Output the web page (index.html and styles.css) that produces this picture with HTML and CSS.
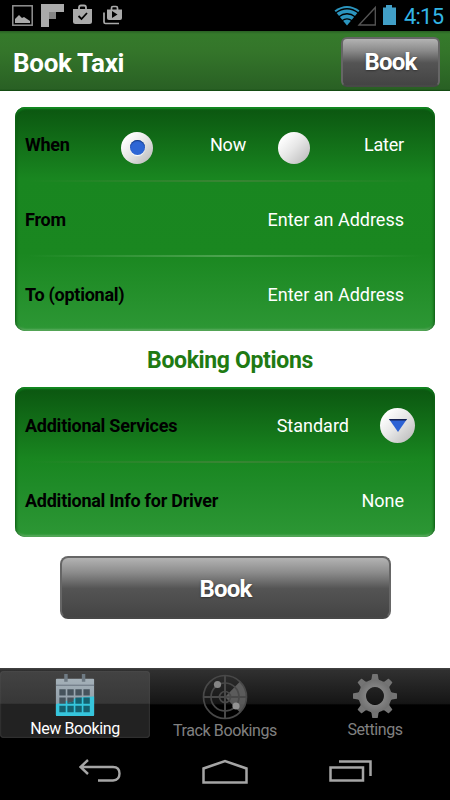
FILE: index.html
```html
<!DOCTYPE html>
<html lang="en">

<head>
    <meta charset="UTF-8">
    <meta name="viewport" content="width=device-width, initial-scale=1.0">
    <title>Book Taxi</title>
    <link rel="stylesheet" href="styles.css">
</head>

<body>
    <!-- Android status bar -->
    <div class="statusbar">
        <svg class="notifications" width="125" height="31" viewBox="0 0 125 31">
            <rect x="12.8" y="5.8" width="19.4" height="19.4" fill="none" stroke="#929292" stroke-width="1.5"/>
            <path d="M15 23v-4l4-4 3 3 2-1 6 4v2z" fill="#aaa"/>
            <path d="M41 4h23v8H49v15h-8z" fill="#aaa"/>
            <path d="M49 12h7v7h-7z" fill="#858585"/>
            <path d="M79 9V7.500q0-2 2-2h3q2 0 2 2V9" fill="none" stroke="#aaa" stroke-width="1.800"/>
            <path d="M73 9h19v12.500q0 2.500-2.500 2.500h-14q-2.500 0-2.500-2.500z" fill="#aaa"/>
            <path d="M78.500 16l3 3 5.500-6" fill="none" stroke="#000" stroke-width="1.800"/>
            <path d="M111.500 10V8q0-1.500 1.500-1.500h3q1.500 0 1.500 1.500v2" fill="none" stroke="#aaa" stroke-width="1.700"/>
            <path d="M107 9.500h15V18q0 2-2 2h-11q-2 0-2-2z" fill="#aaa"/>
            <path d="M112 11v7l5.500-3.500z" fill="#000"/>
            <path d="M104 12.500V22q0 1.500 1.500 1.500H119" fill="none" stroke="#aaa" stroke-width="1.700"/>
        </svg>
        <svg class="signals" width="64" height="31" viewBox="0 0 64 31">
            <path d="M.5 10.500Q13 1.500 25.500 10.500L13 25.500z" fill="#2b95bf"/>
            <path d="M1.500 13Q13 4.500 24.500 13M4.500 17q8.500-6.500 17 0M8 20.800q5-4 10 0" fill="none" stroke="#000" stroke-width="1.300"/>
            <path d="M25 25L41.300 7.500V25z" fill="none" stroke="#555" stroke-width="1.300"/>
            <path d="M49 7.500h3V5h6v2.500h4V25H49z" fill="#419fc7"/>
        </svg>
        <span class="clock">4:15</span>
    </div>

    <div class="header">
        <h1>Book Taxi</h1>
        <button class="book-btn small">Book</button>
    </div>

    <div class="content">
        <!-- Journey details -->
        <div class="card journey">
            <div class="row">
                <span class="label">When</span>
                <span class="radio checked"></span>
                <span class="choice">Now</span>
                <span class="radio"></span>
                <span class="choice">Later</span>
            </div>
            <div class="row">
                <span class="label">From</span>
                <span class="value">Enter an Address</span>
            </div>
            <div class="row bright">
                <span class="label">To (optional)</span>
                <span class="value">Enter an Address</span>
            </div>
        </div>

        <h2>Booking Options</h2>

        <div class="card options">
            <div class="row services">
                <span class="label">Additional Services</span>
                <span class="value">Standard</span>
                <span class="dropdown">
                    <svg width="18" height="13" viewBox="0 0 18 13">
                        <path d="M0 0h18L9 13z" fill="#2d62d4"/>
                        <path d="M0 0h18l-1 1.500H1z" fill="#142052"/>
                    </svg>
                </span>
            </div>
            <div class="row">
                <span class="label">Additional Info for Driver</span>
                <span class="value">None</span>
            </div>
        </div>

        <button class="book-btn large">Book</button>
    </div>

    <!-- Tabs -->
    <div class="tabs">
        <div class="tab active">
            <svg width="46" height="48" viewBox="0 0 46 48">
                <defs>
                    <linearGradient id="cal" x1="0" y1="0" x2="0" y2="1">
                        <stop offset="0" stop-color="#a5b1b9"/>
                        <stop offset="1" stop-color="#8795a0"/>
                    </linearGradient>
                </defs>
                <rect x="3.500" y="7" width="39" height="38" rx="1" fill="url(#cal)"/>
                <path d="M3.500 33q11-4 20-6t19-2v19q0 1-1 1h-37q-1 0-1-1z" fill="#36c5dc"/>
                <path d="M3.500 13.500h39" stroke="#66737d" stroke-width="1"/>
                <path d="M12 2h3.500v8H12zM30 2h3.500v8H30z" fill="#6f7b84"/>
                <path d="M7 17.500h6.500V24H7zM15.200 17.500h6.500V24h-6.500zM23.400 17.500h6.500V24h-6.500zM31.600 17.500h6.500V24h-6.500zM7 26h6.500v6.500H7zM15.200 26h6.500v4l-6.500 2z" fill="#46535c"/>
                <path d="M23.400 26h6.500v6.500h-6.500zM31.600 26h6.500v6.500h-6.500zM15.200 32l6.500-2v2.500h-6.500zM7 34.500h6.500V41H7zM15.200 34.500h6.500V41h-6.500zM23.400 34.500h6.500V41h-6.500zM31.600 34.500h6.500V41h-6.500z" fill="#15606f"/>
            </svg>
            <span>New Booking</span>
        </div>
        <div class="tab track">
            <svg width="46" height="48" viewBox="0 0 46 48">
                <path d="M23 25L38 9.500A22 22 0 0 1 38 40.500z" fill="#707070" opacity=".75"/>
                <g fill="none" stroke="#484848" stroke-width="1.700">
                    <circle cx="23" cy="25" r="21.500"/>
                    <circle cx="23" cy="25" r="14"/>
                    <circle cx="23" cy="25" r="5.500"/>
                    <path d="M23 3v44M1 25h44" stroke-width="2"/>
                </g>
                <circle cx="15.500" cy="12.500" r="3.600" fill="#858585"/>
                <circle cx="34" cy="34" r="3.600" fill="#929292"/>
            </svg>
            <span>Track Bookings</span>
        </div>
        <div class="tab">
            <svg width="46" height="48" viewBox="0 0 46 48">
                <defs>
                    <radialGradient id="gear">
                        <stop offset=".35" stop-color="#8b8b8b"/>
                        <stop offset="1" stop-color="#707070"/>
                    </radialGradient>
                    <path id="tooth" d="M17.500 10l2-3 .7-4.500q.1-.5.600-.5h4.400q.5 0 .6.500l.7 4.500 2 3z"/>
                </defs>
                <g fill="#747474">
                    <use href="#tooth"/>
                    <use href="#tooth" transform="rotate(45 23 24)"/>
                    <use href="#tooth" transform="rotate(90 23 24)"/>
                    <use href="#tooth" transform="rotate(135 23 24)"/>
                    <use href="#tooth" transform="rotate(180 23 24)"/>
                    <use href="#tooth" transform="rotate(225 23 24)"/>
                    <use href="#tooth" transform="rotate(270 23 24)"/>
                    <use href="#tooth" transform="rotate(315 23 24)"/>
                </g>
                <path d="M23 7.500a16.500 16.500 0 1 0 .01 0zM23 15a9 9 0 1 1-.01 0z" fill="url(#gear)" fill-rule="evenodd"/>
            </svg>
            <span>Settings</span>
        </div>
    </div>

    <!-- Android navigation -->
    <div class="navbar">
        <svg width="42" height="24" viewBox="0 0 42 24">
            <path d="M1 8h33q6.500 0 6.500 6.500T34 21.500H19M9 1L1.500 8 9 15" fill="none" stroke="#a5a5a5" stroke-width="2.400"/>
        </svg>
        <svg width="46" height="26" viewBox="0 0 46 26">
            <path d="M1.500 23.500V9.500L23 2l21.500 7.500v14z" fill="none" stroke="#a5a5a5" stroke-width="2.500"/>
        </svg>
        <svg width="44" height="24" viewBox="0 0 44 24">
            <path d="M1.500 8.500h32.500v13H1.500zM10 2.500h31.500V17" fill="none" stroke="#a5a5a5" stroke-width="2.500"/>
        </svg>
    </div>
</body>

</html>
```
FILE: styles.css
```css
* {
    box-sizing: border-box;
}

body {
    margin: 0;
    width: 450px;
    height: 800px;
    display: flex;
    flex-direction: column;
    overflow: hidden;
    background-color: #fff;
    font-family: Roboto, "Liberation Sans", sans-serif;
}

svg {
    display: block;
}

button {
    font-family: inherit;
    padding: 0;
}

/* Status bar */
.statusbar {
    height: 31px;
    display: flex;
    background-color: #000;
}

.signals {
    margin-left: 209px;
}

.clock {
    margin-left: 6px;
    color: #33b5e5;
    font-size: 22px;
    letter-spacing: -0.8px;
    line-height: 33px;
}

/* Header */
.header {
    height: 60px;
    display: flex;
    justify-content: space-between;
    align-items: center;
    padding: 1px 10px 0 13px;
    background: linear-gradient(#296024, #357a2b 5%, #34752a 35%, #296024 97%, #0d450d);
}

.header h1 {
    margin: 2px 0 0;
    color: #fff;
    font-size: 26px;
    letter-spacing: -0.3px;
    line-height: 30px;
}

.book-btn {
    color: #fff;
    font-size: 24px;
    font-weight: bold;
    letter-spacing: -0.8px;
    text-shadow: 0 1px 2px #333;
    border: 2px solid #666;
    border-bottom-color: #484848;
    border-radius: 8px;
    background: linear-gradient(#b3b3b3, #8b8b8b 25%, #545454 52%, #444);
}

.book-btn.small {
    width: 99px;
    height: 50px;
    border-radius: 6px;
}

.book-btn.large {
    display: block;
    width: 331px;
    height: 63px;
    margin: 19px 0 0 45px;
    padding-top: 2px;
}

/* Form cards */
.content {
    height: 577px;
    padding: 16px 15px 0;
}

.card {
    border-radius: 10px;
    box-shadow: inset 3px 0 3px -2px #06530b, inset -3px 0 3px -2px #06530b, inset 0 2px 2px #159025, inset 0 -2px 2px #5cac60;
    color: #fff;
    font-size: 18px;
}

.journey {
    height: 224px;
    background: linear-gradient(#0b5610, #198620 32%, #1a8720 65%, #2d9735);
}

.options {
    height: 150px;
    background: linear-gradient(#0b5610, #198620 48%, #1f8b28 65%, #2d9735);
}

.row {
    height: 73px;
    display: flex;
    align-items: center;
    padding: 1px 31px 0 10px;
}

.row + .row {
    height: 75px;
    padding-top: 4px;
    background: linear-gradient(90deg, transparent 3%, #398534 50%, transparent 97%) 0 0 / 100% 2px no-repeat;
}

.row + .row.bright {
    background-image: linear-gradient(90deg, transparent 3%, #4ca34f 50%, transparent 97%);
}

.label {
    color: #000;
    font-weight: bold;
    font-size: 18px;
    letter-spacing: -0.25px;
}

.value {
    margin-left: auto;
}

.radio {
    width: 32px;
    height: 32px;
    flex-shrink: 0;
    margin: 7px 0 0 32px;
    display: flex;
    align-items: center;
    justify-content: center;
    border-radius: 50%;
    background: linear-gradient(135deg, #fff 15%, #e6e6e6 50%, #b5b5b5);
}

.label + .radio {
    margin-left: auto;
}

.radio.checked::after {
    content: "";
    width: 15px;
    height: 15px;
    border-radius: 50%;
    background-color: #2e66d5;
    box-shadow: inset 0 1px 1px #163a84, 0 1px 1px #fff;
}

.choice {
    width: 93px;
    flex-shrink: 0;
    text-align: right;
    letter-spacing: -0.2px;
}

.choice:last-child {
    width: 94px;
}

.row.services {
    height: 74px;
    padding: 3px 20px 0 10px;
}

.dropdown {
    width: 35px;
    height: 35px;
    margin-left: 31px;
    display: flex;
    align-items: center;
    justify-content: center;
    border-radius: 50%;
    background: linear-gradient(135deg, #fff 15%, #e6e6e6 50%, #b5b5b5);
}

h2 {
    margin: 0;
    height: 56px;
    line-height: 60px;
    padding-left: 10px;
    text-align: center;
    color: #207a12;
    font-size: 23px;
    letter-spacing: -0.35px;
}

/* Bottom tabs */
.tabs {
    height: 77px;
    display: flex;
    background: linear-gradient(#444, #303030 3%, #151515 46%, #000 48%);
}

.tab {
    width: 150px;
    display: flex;
    flex-direction: column;
    align-items: center;
    padding-top: 4px;
    color: #808080;
    font-size: 16px;
    letter-spacing: -0.4px;
    line-height: 19px;
}

.tab.active {
    height: 67px;
    margin-top: 3px;
    padding-top: 1px;
    border-radius: 4px;
    color: #fff;
    background: linear-gradient(#434343, #373737 48%, #222 50%, #222);
    box-shadow: inset 0 0 2px #555;
}

.track span {
    margin-top: 1px;
}

/* System buttons */
.navbar {
    height: 55px;
    display: flex;
    padding: 14px 0 0 79px;
    background-color: #000;
}

.navbar svg + svg {
    margin-left: 81px;
}
```
